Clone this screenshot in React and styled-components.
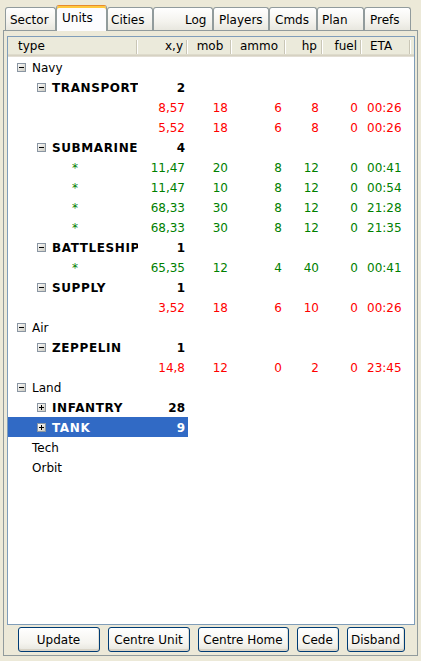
import React from "react";
import styled, { createGlobalStyle, css } from "styled-components";

const GlobalStyle = createGlobalStyle`
  html, body {
    margin: 0;
    padding: 0;
    background: #ece9d8;
  }
  body {
    font-family: "DejaVu Sans", Verdana, sans-serif;
    font-size: 12px;
    color: #000;
  }
`;

const COLUMNS = "130px 50px 44px 54px 37px 39px 49px";

const TABS = [
  { label: "Sector", w: 51, pad: 4 },
  { label: "Units", w: 51, pad: 5, active: true },
  { label: "Cities", w: 46, pad: 3 },
  { label: "Log", w: 60, pad: 31 },
  { label: "Players", w: 56, pad: 5 },
  { label: "Cmds", w: 48, pad: 5 },
  { label: "Plan", w: 47, pad: 4 },
  { label: "Prefs", w: 47, pad: 5 },
];

const HEADERS = [
  { label: "type", align: "left", pad: 10 },
  { label: "x,y", align: "right", pad: 5 },
  { label: "mob", align: "center", pad: 0 },
  { label: "ammo", align: "center", pad: 0 },
  { label: "hp", align: "right", pad: 6 },
  { label: "fuel", align: "right", pad: 5 },
  { label: "ETA", align: "left", pad: 8 },
];

const rows = [
  { level: 0, label: "Navy", node: "open" },
  { level: 1, label: "TRANSPORT", node: "open", count: 2 },
  { level: 2, tone: "red", data: ["8,57", "18", "6", "8", "0", "00:26"] },
  { level: 2, tone: "red", data: ["5,52", "18", "6", "8", "0", "00:26"] },
  { level: 1, label: "SUBMARINE", node: "open", count: 4 },
  { level: 2, label: "*", tone: "green", data: ["11,47", "20", "8", "12", "0", "00:41"] },
  { level: 2, label: "*", tone: "green", data: ["11,47", "10", "8", "12", "0", "00:54"] },
  { level: 2, label: "*", tone: "green", data: ["68,33", "30", "8", "12", "0", "21:28"] },
  { level: 2, label: "*", tone: "green", data: ["68,33", "30", "8", "12", "0", "21:35"] },
  { level: 1, label: "BATTLESHIP", node: "open", count: 1 },
  { level: 2, label: "*", tone: "green", data: ["65,35", "12", "4", "40", "0", "00:41"] },
  { level: 1, label: "SUPPLY", node: "open", count: 1 },
  { level: 2, tone: "red", data: ["3,52", "18", "6", "10", "0", "00:26"] },
  { level: 0, label: "Air", node: "open" },
  { level: 1, label: "ZEPPELIN", node: "open", count: 1 },
  { level: 2, tone: "red", data: ["14,8", "12", "0", "2", "0", "23:45"] },
  { level: 0, label: "Land", node: "open" },
  { level: 1, label: "INFANTRY", node: "closed", count: 28 },
  { level: 1, label: "TANK", node: "closed", count: 9, selected: true },
  { level: 0, label: "Tech" },
  { level: 0, label: "Orbit" },
];

const BUTTONS = [
  { label: "Update", w: 82 },
  { label: "Centre Unit", w: 82 },
  { label: "Centre Home", w: 91 },
  { label: "Cede", w: 42 },
  { label: "Disband", w: 58 },
];

const TONES = { red: "#ff0000", green: "#008000" };

function Expander({ open }) {
  return (
    <ExpanderIcon width="9" height="9" viewBox="0 0 9 9" shapeRendering="crispEdges">
      <defs>
        <linearGradient id="expGrad" x1="0" y1="0" x2="1" y2="1">
          <stop offset="0" stopColor="#ffffff" />
          <stop offset="1" stopColor="#c8c6bc" />
        </linearGradient>
      </defs>
      <rect x="0.5" y="0.5" width="8" height="8" fill="url(#expGrad)" stroke="#8a96a3" />
      <path d="M2 4.5h5" stroke="#000" />
      {!open && <path d="M4.5 2v5" stroke="#000" />}
    </ExpanderIcon>
  );
}

export default function App() {
  return (
    <Window>
      <GlobalStyle />
      <TabStrip>
        {TABS.map((t) => (
          <Tab key={t.label} $w={t.w} $pad={t.pad} $active={t.active}>
            {t.label}
          </Tab>
        ))}
      </TabStrip>
      <Panel>
        <ScrollPane>
          <HeaderRow>
            {HEADERS.map((h) => (
              <HeaderCell key={h.label} $align={h.align} $pad={h.pad}>
                {h.label}
              </HeaderCell>
            ))}
          </HeaderRow>
          {rows.map((r, i) => {
            const color = r.selected ? "#fff" : TONES[r.tone] || "#000";
            return (
              <Row key={i}>
                <TypeCell
                  $pad={r.node ? 9 + 20 * r.level : 24 + 20 * r.level}
                  $selected={r.selected}
                  style={{ color }}
                >
                  {r.node && <Expander open={r.node === "open"} />}
                  {r.label && <Label $bold={r.level === 1}>{r.label}</Label>}
                </TypeCell>
                {r.count !== undefined && (
                  <NumCell $pad={3} $selected={r.selected} $bold>
                    {r.count}
                  </NumCell>
                )}
                {r.data &&
                  r.data.map((v, j) =>
                    j === 5 ? (
                      <EtaCell key={j} style={{ color }}>
                        {v}
                      </EtaCell>
                    ) : (
                      <NumCell key={j} $pad={j === 0 ? 3 : 4} style={{ color }}>
                        {v}
                      </NumCell>
                    )
                  )}
              </Row>
            );
          })}
        </ScrollPane>
        <ButtonBar>
          {BUTTONS.map((b) => (
            <Button key={b.label} $w={b.w}>
              {b.label}
            </Button>
          ))}
        </ButtonBar>
      </Panel>
    </Window>
  );
}

const Window = styled.div`
  width: 421px;
  height: 661px;
  overflow: hidden;
  background: #ece9d8;
`;

const TabStrip = styled.div`
  display: flex;
  align-items: flex-end;
  height: 30px;
  padding-left: 5px;
  box-sizing: border-box;
`;

const Tab = styled.div`
  box-sizing: border-box;
  flex: none;
  width: ${(p) => p.$w}px;
  height: 23px;
  padding: 4px 0 0 ${(p) => p.$pad}px;
  line-height: 16px;
  white-space: nowrap;
  border: 1px solid #919b9c;
  border-bottom: none;
  border-radius: 3px 3px 0 0;
  background: linear-gradient(#ffffff, #f4f3ee 60%, #e8e7df);
  ${(p) =>
    p.$active &&
    css`
      height: 26px;
      margin-bottom: -1px;
      position: relative;
      z-index: 1;
      border-top-color: #e68b2c;
      background: #fcfcfe;
      box-shadow: inset 0 2px 0 #ffc83c;
    `}
`;

const Panel = styled.div`
  box-sizing: border-box;
  margin-left: 3px;
  width: 415px;
  height: 626px;
  border: 1px solid #919b9c;
  padding: 5px 2px 3px 3px;
  display: flex;
  flex-direction: column;
  gap: 2px;
  background: #ece9d8;
`;

const ScrollPane = styled.div`
  box-sizing: border-box;
  width: 408px;
  height: 589px;
  flex: none;
  border: 1px solid #7f9db9;
  background: #fff;
  overflow: hidden;
`;

const HeaderRow = styled.div`
  display: grid;
  grid-template-columns: ${COLUMNS};
  height: 20px;
  background: #ebeadb;
  box-shadow: inset 0 -1px 0 #e2ded4, inset 0 -2px 0 #d6d2c2, inset 0 -3px 0 #dedbcc;
`;

const HeaderCell = styled.div`
  box-sizing: border-box;
  line-height: 19px;
  text-align: ${(p) => p.$align};
  padding: 0 ${(p) => (p.$align === "right" ? p.$pad : 0)}px 0
    ${(p) => (p.$align === "left" ? p.$pad : 0)}px;
  white-space: nowrap;
  background:
    linear-gradient(#c9c6b6, #c9c6b6) no-repeat calc(100% - 1px) 3px / 1px 14px,
    linear-gradient(#ffffff, #ffffff) no-repeat 100% 3px / 1px 14px;
`;

const Row = styled.div`
  display: grid;
  grid-template-columns: ${COLUMNS};
  height: 20px;
`;

const TypeCell = styled.div`
  box-sizing: border-box;
  min-width: 0;
  display: flex;
  align-items: center;
  padding-left: ${(p) => p.$pad}px;
  padding-top: 1px;
  overflow: hidden;
  white-space: nowrap;
  background: ${(p) => (p.$selected ? "#316ac5" : "transparent")};
`;

const ExpanderIcon = styled.svg`
  flex: none;
  margin-right: 6px;
  margin-top: -1px;
`;

const Label = styled.span`
  flex: none;
  font-weight: ${(p) => (p.$bold ? 700 : 400)};
  letter-spacing: ${(p) => (p.$bold ? "0.6px" : "0")};
  line-height: 18px;
`;

const NumCell = styled.div`
  box-sizing: border-box;
  text-align: right;
  padding: 2px ${(p) => p.$pad}px 0 0;
  line-height: 18px;
  white-space: nowrap;
  font-weight: ${(p) => (p.$bold ? 700 : 400)};
  color: ${(p) => (p.$selected ? "#fff" : "#000")};
  background: ${(p) => (p.$selected ? "#316ac5" : "transparent")};
`;

const EtaCell = styled.div`
  box-sizing: border-box;
  padding: 2px 0 0 5px;
  line-height: 18px;
  white-space: nowrap;
`;

const ButtonBar = styled.div`
  display: flex;
  justify-content: center;
  gap: 8px;
  height: 25px;
`;

const Button = styled.button`
  box-sizing: border-box;
  flex: none;
  width: ${(p) => p.$w}px;
  height: 25px;
  padding: 0;
  font-family: "DejaVu Sans", Verdana, sans-serif;
  font-size: 12px;
  color: #000;
  border: 1px solid #003c74;
  border-radius: 3px;
  background: linear-gradient(#ffffff, #f5f4ef 65%, #e6e5dd);
  box-shadow: inset 0 -2px 0 #d8d3c6, inset -1px 0 0 #e2e0d6;
`;
